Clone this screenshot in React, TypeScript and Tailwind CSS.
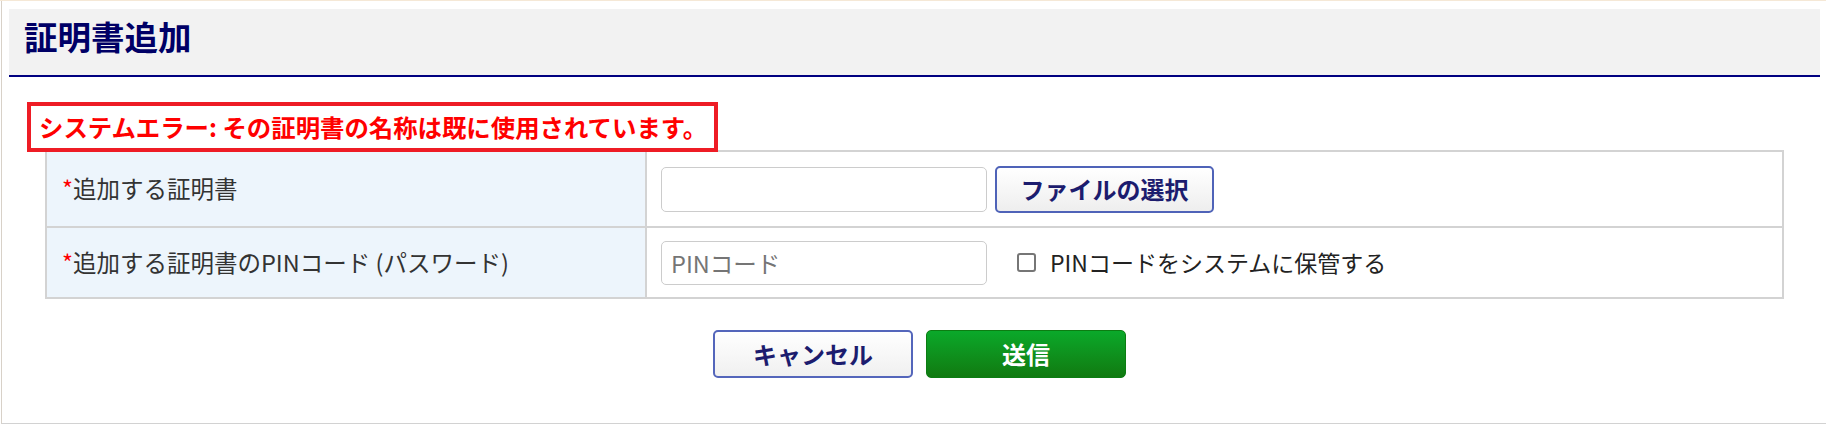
import { useState } from "react";

const FONT = "font-['Noto_Sans_CJK_JP','Noto_Sans',sans-serif]";

const AddCertificate = () => {
  const [keepPin, setKeepPin] = useState(false);

  return (
    <div className={`${FONT} bg-white border-t border-[#f5e8d6]`}>
      <div className="ml-px border-l border-b border-l-[#d8d1c8] border-b-[#d2d2d2] pl-[7px] pr-[6px] pt-[8px] pb-[45px]">
        {/* page title */}
        <div className="h-[68px] bg-[#f2f2f2] border-b-2 border-[#000080] pl-[15px] pt-[5px]">
          <h1 className="text-[33.5px] leading-[44px] font-bold text-[#000066]">証明書追加</h1>
        </div>

        {/* error message */}
        <div className="ml-[18px] mt-[25px] inline-block border-4 border-[#ee1c25] pl-[8px] pr-[7px] py-[3px]">
          <p className="text-[24.4px] leading-[36px] font-bold text-[#ff0000] whitespace-nowrap">
            システムエラー: その証明書の名称は既に使用されています。
          </p>
        </div>

        {/* form table */}
        <div className="mx-[36px] -mt-[2px] border-2 border-[#d3d3d3] grid grid-cols-[600px_1fr] text-[23.5px] text-[#333]">
          <div className="h-[74px] bg-[#edf5fc] border-r-2 border-[#d3d3d3] pl-[15px] flex items-center">
            <span className="text-[#ff0000]">*</span>追加する証明書
          </div>
          <div className="h-[74px] pl-[14px] flex items-center">
            <input
              type="text"
              readOnly
              className="w-[326px] h-[45px] border border-[#cccccc] rounded-[5px] bg-white outline-none"
            />
            <button className="ml-[8px] w-[219px] h-[47px] border-2 border-[#4f63b8] rounded-[5px] bg-gradient-to-b from-white to-[#eeeeee] text-[24px] font-bold text-[#1c1c6e] cursor-pointer">
              ファイルの選択
            </button>
          </div>

          <div className="h-[71px] bg-[#edf5fc] border-r-2 border-t-2 border-[#d3d3d3] pl-[15px] flex items-center">
            <span className="text-[#ff0000]">*</span>追加する証明書のPINコード (パスワード)
          </div>
          <div className="h-[71px] border-t-2 border-[#d3d3d3] pl-[14px] flex items-center">
            <input
              type="password"
              placeholder="PINコード"
              className="w-[326px] h-[44px] border border-[#cccccc] rounded-[5px] bg-white px-[9px] text-[23.5px] placeholder:text-[#757575] outline-none"
            />
            <label className="ml-[30px] flex items-center gap-[14px] text-[23px] text-[#222] cursor-pointer">
              <input
                type="checkbox"
                checked={keepPin}
                onChange={(e) => setKeepPin(e.target.checked)}
                className="appearance-none w-[19px] h-[19px] border-2 border-[#767676] rounded-[3px] bg-white checked:bg-[#0075ff] checked:border-[#0075ff]"
              />
              PINコードをシステムに保管する
            </label>
          </div>
        </div>

        {/* actions */}
        <div className="mt-[31px] pl-[10px] flex justify-center gap-[13px]">
          <button className="w-[200px] h-[48px] border-2 border-[#5466bb] rounded-[5px] bg-gradient-to-b from-white to-[#f0f0f0] text-[24px] font-bold text-[#1c1c6e] cursor-pointer">
            キャンセル
          </button>
          <button className="w-[200px] h-[48px] border border-[#0c7d12] rounded-[5px] bg-gradient-to-b from-[#0aa92a] to-[#107a10] text-[24px] font-bold text-white cursor-pointer">
            送信
          </button>
        </div>
      </div>
    </div>
  );
};

export default function App() {
  return <AddCertificate />;
}
